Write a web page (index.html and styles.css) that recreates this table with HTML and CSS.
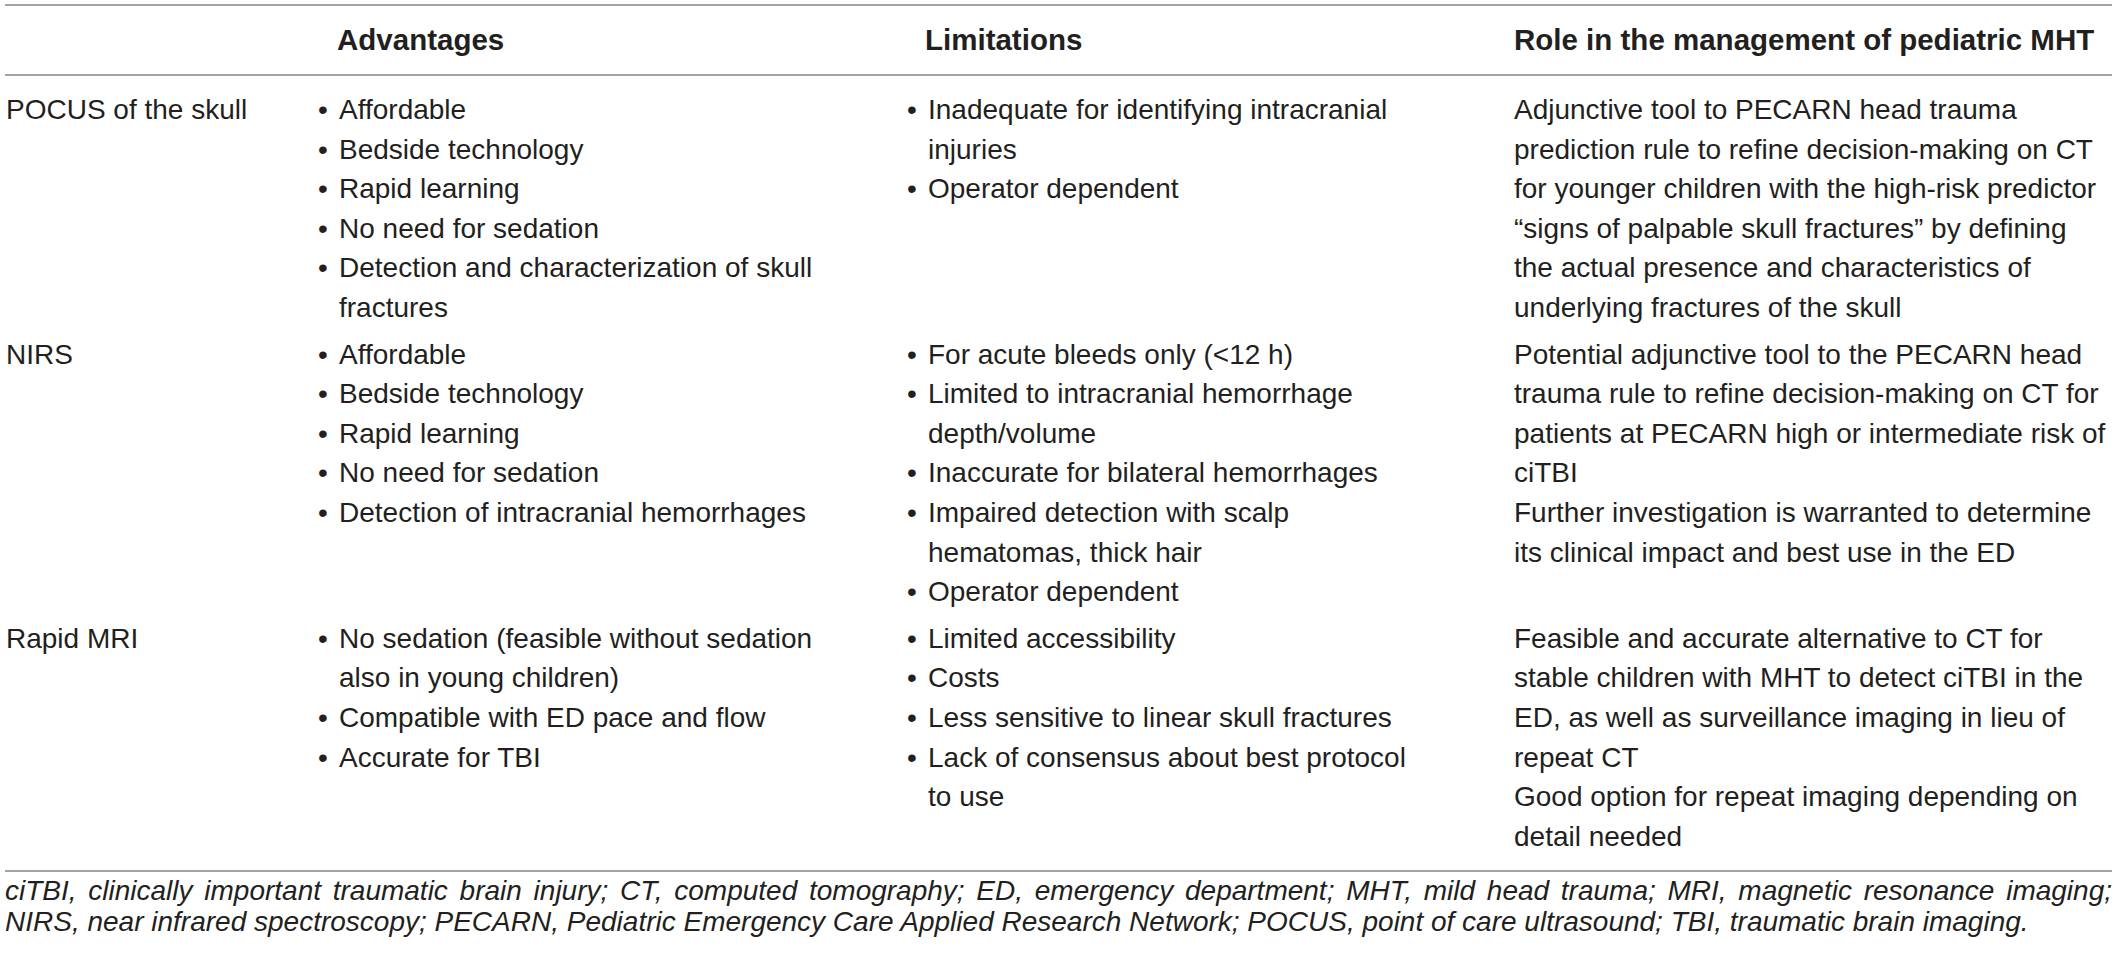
FILE: index.html
```html
<!DOCTYPE html>
<html lang="en">
<head>
  <meta charset="UTF-8" />
  <title>Bedside imaging in pediatric mild head trauma</title>
  <link rel="stylesheet" href="styles.css">
</head>
<body>
  <div class="sheet">
    <table class="imaging">
      <colgroup>
        <col class="col-method" />
        <col class="col-adv" />
        <col class="col-lim" />
        <col class="col-role" />
      </colgroup>
      <thead>
        <tr>
          <th class="method"></th>
          <th class="adv">Advantages</th>
          <th class="lim">Limitations</th>
          <th class="role">Role in the management of pediatric MHT</th>
        </tr>
      </thead>
      <tbody>
        <tr>
          <td class="method">POCUS of the skull</td>
          <td class="adv">
            <ul class="points">
              <li>Affordable</li>
              <li>Bedside technology</li>
              <li>Rapid learning</li>
              <li>No need for sedation</li>
              <li>Detection and characterization of skull fractures</li>
            </ul>
          </td>
          <td class="lim">
            <ul class="points">
              <li>Inadequate for identifying intracranial injuries</li>
              <li>Operator dependent</li>
            </ul>
          </td>
          <td class="role">
            <p>Adjunctive tool to PECARN head trauma prediction rule to refine decision-making on CT for younger children with the high-risk predictor “signs of palpable skull fractures” by defining the actual presence and characteristics of underlying fractures of the skull</p>
          </td>
        </tr>
        <tr>
          <td class="method">NIRS</td>
          <td class="adv">
            <ul class="points">
              <li>Affordable</li>
              <li>Bedside technology</li>
              <li>Rapid learning</li>
              <li>No need for sedation</li>
              <li>Detection of intracranial hemorrhages</li>
            </ul>
          </td>
          <td class="lim">
            <ul class="points">
              <li>For acute bleeds only (&lt;12 h)</li>
              <li>Limited to intracranial hemorrhage depth/volume</li>
              <li>Inaccurate for bilateral hemorrhages</li>
              <li>Impaired detection with scalp hematomas, thick hair</li>
              <li>Operator dependent</li>
            </ul>
          </td>
          <td class="role">
            <p>Potential adjunctive tool to the PECARN head trauma rule to refine decision-making on CT for patients at PECARN high or intermediate risk of ciTBI</p>
            <p>Further investigation is warranted to determine its clinical impact and best use in the ED</p>
          </td>
        </tr>
        <tr>
          <td class="method">Rapid MRI</td>
          <td class="adv">
            <ul class="points">
              <li>No sedation (feasible without sedation also in young children)</li>
              <li>Compatible with ED pace and flow</li>
              <li>Accurate for TBI</li>
            </ul>
          </td>
          <td class="lim">
            <ul class="points">
              <li>Limited accessibility</li>
              <li>Costs</li>
              <li>Less sensitive to linear skull fractures</li>
              <li>Lack of consensus about best protocol to use</li>
            </ul>
          </td>
          <td class="role">
            <p>Feasible and accurate alternative to CT for stable children with MHT to detect ciTBI in the ED, as well as surveillance imaging in lieu of repeat CT</p>
            <p>Good option for repeat imaging depending on detail needed</p>
          </td>
        </tr>
      </tbody>
    </table>
    <p class="footnote">ciTBI, clinically important traumatic brain injury; CT, computed tomography; ED, emergency department; MHT, mild head trauma; MRI, magnetic resonance imaging; NIRS, near infrared spectroscopy; PECARN, Pediatric Emergency Care Applied Research Network; POCUS, point of care ultrasound; TBI, traumatic brain imaging.</p>
  </div>
</body>
</html>
```

FILE: styles.css
```css
:root {
  --ink: #231f20;
  --rule: #a3a3a3;
}

* {
  box-sizing: border-box;
}

body {
  margin: 0;
  background: #fff;
  color: var(--ink);
  font-family: 'Liberation Sans', Arial, sans-serif;
}

.sheet {
  width: 2107px;
  margin-left: 5px;
  padding-top: 4px;
}

/* Main table */
.imaging {
  width: 100%;
  table-layout: fixed;
  border-collapse: collapse;
  border-top: 2px solid var(--rule);
  border-bottom: 2px solid var(--rule);
  font-size: 28px;
  line-height: 39.6px;
}
.col-method { width: 313px; }
.col-adv { width: 589px; }
.col-lim { width: 607px; }
.col-role { width: 598px; }

.imaging th {
  height: 70px;
  padding: 0;
  text-align: left;
  font-weight: 700;
  font-size: 29.5px;
  line-height: 34px;
  vertical-align: middle;
  border-bottom: 2px solid var(--rule);
}
.imaging th.adv { padding-left: 19px; }
.imaging th.lim { padding-left: 18px; }

.imaging td {
  padding: 3.5px 0;
  vertical-align: top;
}
.imaging tbody tr:first-child td { padding-top: 14px; }
.imaging tbody tr:last-child td { padding-bottom: 14px; }

.imaging td.method { padding-left: 1px; }
.imaging td.adv { padding-right: 62px; }
.imaging td.lim { padding-right: 84px; }
.imaging td.role { padding-right: 3px; }

/* Bulleted points with hanging indent */
.points {
  list-style: none;
  margin: 0;
  padding: 0;
}
.points li {
  display: flex;
}
.points li::before {
  content: "•";
  flex: none;
  width: 21px;
}

.role p {
  margin: 0;
}

/* Abbreviations */
.footnote {
  margin: 4px 0 0;
  font-size: 28px;
  line-height: 30.5px;
  font-style: italic;
  text-align: justify;
}
```
